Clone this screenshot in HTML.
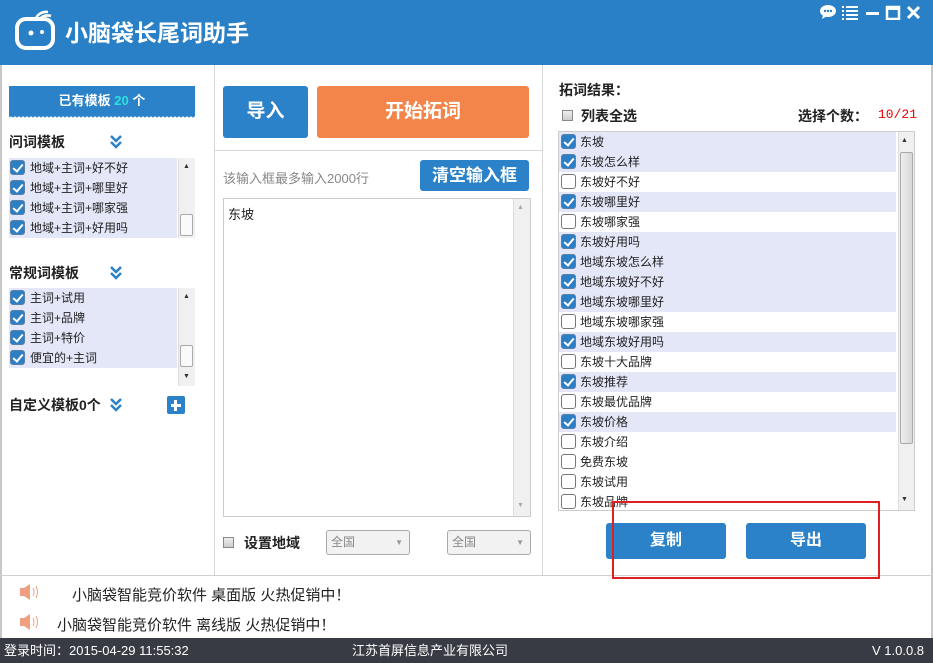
<!DOCTYPE html>
<html><head><meta charset="utf-8"><style>
*{margin:0;padding:0;box-sizing:border-box}
body{width:933px;height:663px;position:relative;overflow:hidden;background:#fff;font-family:"Liberation Sans","Noto Sans CJK SC",sans-serif;font-size:12px;color:#222}
.a{position:absolute}
.cb{position:absolute;width:15px;height:15px;border-radius:3px;background:#2d7fc4;border:1px solid #5a7fa8}
.cb::after{content:"";position:absolute;left:4px;top:1px;width:4px;height:8px;border:solid #fff;border-width:0 2px 2px 0;transform:rotate(40deg)}
.cb.u{background:#fff;border:1px solid #777}
.cb.u::after{display:none}
.sq{position:absolute;width:11px;height:11px;border:1px solid #888;background:linear-gradient(#eee,#ccc)}
.row{position:absolute;left:0;height:20px;width:337px;line-height:20px;padding-left:21px;font-size:12px}
.row.c{background:#e4e7f8}
.row .cb{left:2px;top:2px}
.sb{position:absolute;background:#f0f0f0;border-left:1px solid #ddd}
.btn{position:absolute;background:#2b82c9;color:#fff;font-weight:bold;text-align:center;border-radius:3px}
.chev{position:absolute;color:#2b82c9;font-weight:bold;font-size:13px;line-height:7px;width:14px;text-align:center}
</style></head><body>
<!-- header -->
<div class="a" style="left:0;top:0;width:933px;height:65px;background:#2980c6"></div>
<svg class="a" style="left:14px;top:10px" width="44" height="40" viewBox="0 0 44 40"><rect x="3" y="9" width="36" height="29" rx="9" fill="none" stroke="#fff" stroke-width="4"/><circle cx="17" cy="23" r="2.5" fill="#fff"/><circle cx="28" cy="22" r="2" fill="#fff"/><path d="M22 8 Q26 1 34 2 M26 9 Q30 4 37 6" stroke="#fff" stroke-width="2.5" fill="none"/></svg>
<div class="a" style="left:65px;top:14px;color:#fff;font-size:23px;font-weight:bold;letter-spacing:0px">小脑袋长尾词助手</div>
<div class="a" style="left:820px;top:4px;color:#fff;font-size:15px;font-weight:bold">
<svg width="110" height="16" viewBox="0 0 110 16"><ellipse cx="8" cy="7" rx="8" ry="6" fill="#fff"/><path d="M3 11 L2 15 L7 12Z" fill="#fff"/><circle cx="5" cy="7" r="1.2" fill="#2980c6"/><circle cx="8" cy="7" r="1.2" fill="#2980c6"/><circle cx="11" cy="7" r="1.2" fill="#2980c6"/><g fill="#fff"><rect x="22" y="2" width="2" height="2"/><rect x="26" y="2" width="12" height="2"/><rect x="22" y="6" width="2" height="2"/><rect x="26" y="6" width="12" height="2"/><rect x="22" y="10" width="2" height="2"/><rect x="26" y="10" width="12" height="2"/><rect x="22" y="14" width="2" height="2"/><rect x="26" y="14" width="12" height="2"/><rect x="46" y="8" width="13" height="3"/></g><rect x="67" y="3" width="12" height="12" fill="none" stroke="#fff" stroke-width="2.5"/><rect x="67" y="3" width="12" height="3" fill="#fff"/><path d="M88 3 L99 14 M99 3 L88 14" stroke="#fff" stroke-width="3"/></svg></div>
<!-- frame borders -->
<div class="a" style="left:0;top:65px;width:2px;height:573px;background:#c8c8c8"></div>
<div class="a" style="left:931px;top:65px;width:2px;height:573px;background:#c8c8c8"></div>
<div class="a" style="left:214px;top:65px;width:1px;height:510px;background:#d8d8d8"></div>
<div class="a" style="left:542px;top:65px;width:1px;height:510px;background:#d8d8d8"></div>
<div class="a" style="left:0;top:575px;width:933px;height:1px;background:#d0d0d0"></div>
<div class="a" style="left:215px;top:150px;width:327px;height:1px;background:#d8d8d8"></div>
<!-- left -->
<div class="a" style="left:9px;top:86px;width:186px;height:30px;background:#2b82c9;color:#fff;font-weight:bold;font-size:13px;text-align:center;line-height:30px">已有模板 <span style="color:#2de0e0">20</span> 个</div>
<svg class="a" style="left:9px;top:115px" width="186" height="4"><path d="M0 0 H186 V1 Q184 4 182 1 Q180 4 178 1 Q176 4 174 1 Q172 4 170 1 Q168 4 166 1 Q164 4 162 1 Q160 4 158 1 Q156 4 154 1 Q152 4 150 1 Q148 4 146 1 Q144 4 142 1 Q140 4 138 1 Q136 4 134 1 Q132 4 130 1 Q128 4 126 1 Q124 4 122 1 Q120 4 118 1 Q116 4 114 1 Q112 4 110 1 Q108 4 106 1 Q104 4 102 1 Q100 4 98 1 Q96 4 94 1 Q92 4 90 1 Q88 4 86 1 Q84 4 82 1 Q80 4 78 1 Q76 4 74 1 Q72 4 70 1 Q68 4 66 1 Q64 4 62 1 Q60 4 58 1 Q56 4 54 1 Q52 4 50 1 Q48 4 46 1 Q44 4 42 1 Q40 4 38 1 Q36 4 34 1 Q32 4 30 1 Q28 4 26 1 Q24 4 22 1 Q20 4 18 1 Q16 4 14 1 Q12 4 10 1 Q8 4 6 1 Q4 4 2 1 Q1 4 0 1Z" fill="#2b82c9"/></svg>
<div class="a" style="left:9px;top:132px;font-size:14px;font-weight:bold">问词模板</div>
<svg class="a" style="left:109px;top:134px" width="14" height="15"><path d="M2 2 L7 7 L12 2 M2 8 L7 13 L12 8" stroke="#2b82c9" stroke-width="2.5" fill="none"/></svg>
<div class="a" style="left:9px;top:158px;width:168px;height:80px;background:#e4e7f8"></div>
<div class="sb" style="left:178px;top:158px;width:17px;height:80px"></div>
<div class="a" style="left:180px;top:214px;width:13px;height:22px;background:#fafafa;border:1px solid #aaa;border-radius:2px"></div>
<div class="a" style="left:183px;top:163px;font-size:7px;color:#333">▲</div>
<div class="row c" style="top:158px;left:9px;width:168px">地域+主词+好不好<span class="cb" style="left:1px"></span></div>
<div class="row c" style="top:178px;left:9px;width:168px">地域+主词+哪里好<span class="cb" style="left:1px"></span></div>
<div class="row c" style="top:198px;left:9px;width:168px">地域+主词+哪家强<span class="cb" style="left:1px"></span></div>
<div class="row c" style="top:218px;left:9px;width:168px">地域+主词+好用吗<span class="cb" style="left:1px"></span></div>
<div class="a" style="left:9px;top:263px;font-size:14px;font-weight:bold">常规词模板</div>
<svg class="a" style="left:109px;top:265px" width="14" height="15"><path d="M2 2 L7 7 L12 2 M2 8 L7 13 L12 8" stroke="#2b82c9" stroke-width="2.5" fill="none"/></svg>
<div class="a" style="left:9px;top:288px;width:168px;height:80px;background:#e4e7f8"></div>
<div class="sb" style="left:178px;top:288px;width:17px;height:98px"></div>
<div class="a" style="left:180px;top:345px;width:13px;height:22px;background:#fafafa;border:1px solid #aaa;border-radius:2px"></div>
<div class="a" style="left:183px;top:293px;font-size:7px;color:#333">▲</div>
<div class="a" style="left:183px;top:373px;font-size:7px;color:#333">▼</div>
<div class="row c" style="top:288px;left:9px;width:168px">主词+试用<span class="cb" style="left:1px"></span></div>
<div class="row c" style="top:308px;left:9px;width:168px">主词+品牌<span class="cb" style="left:1px"></span></div>
<div class="row c" style="top:328px;left:9px;width:168px">主词+特价<span class="cb" style="left:1px"></span></div>
<div class="row c" style="top:348px;left:9px;width:168px">便宜的+主词<span class="cb" style="left:1px"></span></div>
<div class="a" style="left:9px;top:395px;font-size:14px;font-weight:bold">自定义模板0个</div>
<svg class="a" style="left:109px;top:397px" width="14" height="15"><path d="M2 2 L7 7 L12 2 M2 8 L7 13 L12 8" stroke="#2b82c9" stroke-width="2.5" fill="none"/></svg>
<div class="a" style="left:167px;top:396px;width:18px;height:18px;background:#2b82c9;border-radius:2px"></div>
<div class="a" style="left:171px;top:404px;width:10px;height:3px;background:#fff"></div>
<div class="a" style="left:174px;top:400px;width:3px;height:11px;background:#fff"></div>
<!-- middle -->
<div class="btn" style="left:223px;top:86px;width:85px;height:52px;line-height:52px;font-size:19px">导入</div>
<div class="btn" style="left:317px;top:86px;width:212px;height:52px;line-height:52px;font-size:19px;background:#f3854b">开始拓词</div>
<div class="a" style="left:223px;top:168px;color:#888;font-size:13px">该输入框最多输入2000行</div>
<div class="btn" style="left:420px;top:160px;width:109px;height:31px;line-height:31px;font-size:17px">清空输入框</div>
<div class="a" style="left:223px;top:198px;width:308px;height:319px;border:1px solid #ccc"></div>
<div class="sb" style="left:513px;top:199px;width:17px;height:317px"></div>
<div class="a" style="left:517px;top:204px;font-size:7px;color:#aaa">▲</div>
<div class="a" style="left:517px;top:502px;font-size:7px;color:#aaa">▼</div>
<div class="a" style="left:228px;top:204px;font-size:13px">东坡</div>
<div class="sq" style="left:223px;top:537px"></div>
<div class="a" style="left:244px;top:533px;font-size:14px;font-weight:bold">设置地域</div>
<div class="a" style="left:326px;top:530px;width:84px;height:25px;border:1px solid #aaa;border-radius:3px;background:#f2f2f2;color:#888;line-height:23px;padding-left:4px">全国<span style="position:absolute;right:6px;font-size:8px;color:#999">▼</span></div>
<div class="a" style="left:447px;top:530px;width:84px;height:25px;border:1px solid #aaa;border-radius:3px;background:#f2f2f2;color:#888;line-height:23px;padding-left:4px">全国<span style="position:absolute;right:6px;font-size:8px;color:#999">▼</span></div>
<!-- right -->
<div class="a" style="left:559px;top:80px;font-size:14px;font-weight:bold">拓词结果：</div>
<div class="sq" style="left:562px;top:110px"></div>
<div class="a" style="left:581px;top:106px;font-size:14px;font-weight:bold">列表全选</div>
<div class="a" style="left:798px;top:106px;font-size:14px;font-weight:bold">选择个数：</div>
<div class="a" style="left:878px;top:107px;font-size:13px;color:#e00;font-family:'Liberation Mono',monospace">10/21</div>
<div class="a" style="left:558px;top:131px;width:357px;height:380px;border:1px solid #ccc;overflow:hidden">
<div class="row c" style="top:0">东坡<span class="cb"></span></div>
<div class="row c" style="top:20px">东坡怎么样<span class="cb"></span></div>
<div class="row" style="top:40px">东坡好不好<span class="cb u"></span></div>
<div class="row c" style="top:60px">东坡哪里好<span class="cb"></span></div>
<div class="row" style="top:80px">东坡哪家强<span class="cb u"></span></div>
<div class="row c" style="top:100px">东坡好用吗<span class="cb"></span></div>
<div class="row c" style="top:120px">地域东坡怎么样<span class="cb"></span></div>
<div class="row c" style="top:140px">地域东坡好不好<span class="cb"></span></div>
<div class="row c" style="top:160px">地域东坡哪里好<span class="cb"></span></div>
<div class="row" style="top:180px">地域东坡哪家强<span class="cb u"></span></div>
<div class="row c" style="top:200px">地域东坡好用吗<span class="cb"></span></div>
<div class="row" style="top:220px">东坡十大品牌<span class="cb u"></span></div>
<div class="row c" style="top:240px">东坡推荐<span class="cb"></span></div>
<div class="row" style="top:260px">东坡最优品牌<span class="cb u"></span></div>
<div class="row c" style="top:280px">东坡价格<span class="cb"></span></div>
<div class="row" style="top:300px">东坡介绍<span class="cb u"></span></div>
<div class="row" style="top:320px">免费东坡<span class="cb u"></span></div>
<div class="row" style="top:340px">东坡试用<span class="cb u"></span></div>
<div class="row" style="top:360px">东坡品牌<span class="cb u"></span></div>
<div class="sb" style="left:339px;top:0;width:17px;height:378px"></div>
<div class="a" style="left:341px;top:20px;width:13px;height:292px;background:linear-gradient(90deg,#eee,#d8d8d8);border:1px solid #aaa;border-radius:2px"></div>
<div class="a" style="left:342px;top:5px;font-size:7px;color:#333">▲</div>
<div class="a" style="left:342px;top:364px;font-size:7px;color:#333">▼</div>
</div>
<div class="btn" style="left:606px;top:523px;width:120px;height:36px;line-height:36px;font-size:16px">复制</div>
<div class="btn" style="left:746px;top:523px;width:120px;height:36px;line-height:36px;font-size:16px">导出</div>
<div class="a" style="left:612px;top:501px;width:268px;height:78px;border:2px solid #e02020"></div>
<!-- bottom -->
<svg class="a" style="left:20px;top:584px" width="20" height="16"><rect x="0" y="4" width="4" height="8" fill="#f0a080"/><path d="M4 4 L10 0 V16 L4 12Z" fill="#f0a080"/><path d="M13 4 Q15 8 13 12 M16 2 Q19 8 16 14" stroke="#f0a080" fill="none"/></svg>
<svg class="a" style="left:20px;top:614px" width="20" height="16"><rect x="0" y="4" width="4" height="8" fill="#f0a080"/><path d="M4 4 L10 0 V16 L4 12Z" fill="#f0a080"/><path d="M13 4 Q15 8 13 12 M16 2 Q19 8 16 14" stroke="#f0a080" fill="none"/></svg>
<div class="a" style="left:72px;top:584px;font-size:15px">小脑袋智能竞价软件 桌面版 火热促销中！</div>
<div class="a" style="left:57px;top:614px;font-size:15px">小脑袋智能竞价软件 离线版 火热促销中！</div>
<div class="a" style="left:0;top:638px;width:933px;height:25px;background:#383b44;color:#fff;font-size:13px;line-height:25px">
<span class="a" style="left:4px">登录时间：2015-04-29 11:55:32</span>
<span class="a" style="left:352px">江苏首屏信息产业有限公司</span>
<span class="a" style="left:872px">V 1.0.0.8</span></div>
</body></html>
